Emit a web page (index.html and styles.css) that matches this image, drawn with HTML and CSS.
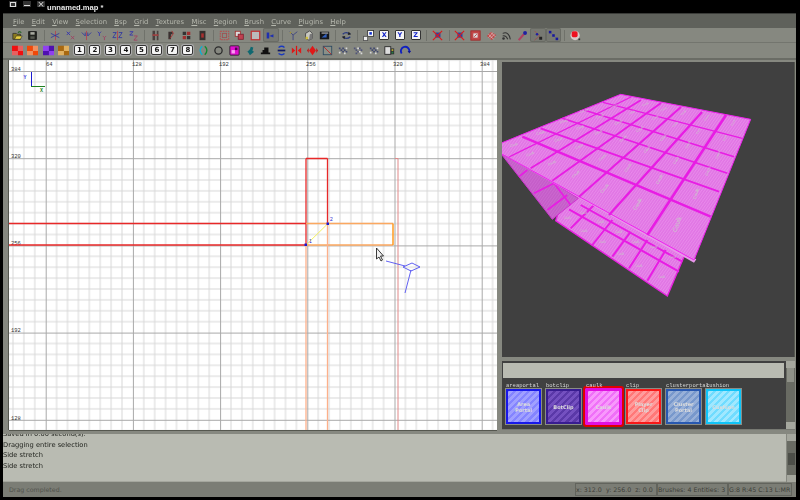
FILE: index.html
```html
<!DOCTYPE html>
<html lang="en">
<head>
<meta charset="utf-8">
<title>unnamed.map *</title>
<link rel="stylesheet" href="styles.css">
</head>
<body>
<svg class="defs" width="0" height="0" aria-hidden="true">
  <defs>
    <symbol id="open" viewBox="0 0 13 13"><path d="M1 4h4l1 1h4v6H1z" fill="#8a7a20" stroke="#222" stroke-width=".8"/><path d="M3 11l2-4h7l-2 4z" fill="#e8d040" stroke="#222" stroke-width=".6"/><path d="M7 3q2-2 4 0" fill="none" stroke="#186018" stroke-width="1.2"/></symbol>
    <symbol id="save" viewBox="0 0 13 13"><rect x="2" y="2" width="9" height="9" fill="#22241f" stroke="#111"/><rect x="4" y="2.5" width="5" height="3" fill="#a8aaa0"/><rect x="4" y="7.5" width="5" height="3" fill="#55574f"/></symbol>
    <symbol id="flipx" viewBox="0 0 13 13"><path d="M6.5 1v11" stroke="#c03040" stroke-width=".8"/><path d="M1 4l10 5M11 4L1 9" stroke="#3038a0" stroke-width="1"/></symbol>
    <symbol id="rotx" viewBox="0 0 13 13"><path d="M2 2l4 4M6 2L2 6" stroke="#3030b0"/><path d="M7 7l4 4M11 7l-4 4" stroke="#a04060"/></symbol>
    <symbol id="flipy" viewBox="0 0 13 13"><path d="M1 3l4 4 0-4M12 3L8 7V3" fill="none" stroke="#3038a0"/><path d="M6.5 1v11" stroke="#c03040" stroke-width=".8"/></symbol>
    <symbol id="roty" viewBox="0 0 13 13"><path d="M2 2l2 2 2-2M4 4v3" stroke="#3030b0" fill="none"/><path d="M8 7l2 2 2-2M10 9v3" stroke="#a04060" fill="none"/></symbol>
    <symbol id="flipz" viewBox="0 0 13 13"><path d="M1 3h4L1 9h4M8 3h4L8 9h4" fill="none" stroke="#3038a0"/><path d="M6.5 1v11" stroke="#c03040" stroke-width=".8"/></symbol>
    <symbol id="rotz" viewBox="0 0 13 13"><path d="M2 2h4L2 6h4" fill="none" stroke="#3030b0"/><path d="M7 7h4l-4 5h4" fill="none" stroke="#a04060"/></symbol>
    <symbol id="csg1" viewBox="0 0 13 13"><path d="M3 1h3v11H3zM8 1h2v11H8z" fill="#4a3f3e"/><path d="M3 6h7" stroke="#a04040" stroke-width="2"/></symbol>
    <symbol id="csg2" viewBox="0 0 13 13"><path d="M4 2h5v3H7v6H4z" fill="#3a3030"/><path d="M8 1l2 3-4 6" stroke="#b03030" fill="none"/></symbol>
    <symbol id="csg3" viewBox="0 0 13 13"><path d="M2 2h4v4H2zM7 7h4v4H7z" fill="#333"/><path d="M7 2h4v4H7zM2 7h4v4H2z" fill="#a03030"/></symbol>
    <symbol id="csg4" viewBox="0 0 13 13"><path d="M3 1h7v11H3z" fill="#35302f"/><path d="M5 4h3v5H5z" fill="#a83030"/></symbol>
    <symbol id="selbox" viewBox="0 0 13 13"><rect x="1.5" y="1.5" width="10" height="10" fill="#888a82" stroke="#c04040" stroke-dasharray="2 1"/><rect x="4" y="4" width="5" height="5" fill="none" stroke="#a05050"/></symbol>
    <symbol id="seltouch" viewBox="0 0 13 13"><rect x="1.5" y="1.5" width="6" height="6" fill="#ddd" stroke="#a03030"/><rect x="5" y="5" width="6" height="6" fill="#c04050" stroke="#802030"/></symbol>
    <symbol id="selinside" viewBox="0 0 13 13"><rect x="1.5" y="1.5" width="10" height="10" fill="#bbb" stroke="#c03030" stroke-width="1.4"/></symbol>
    <symbol id="selact" viewBox="0 0 13 13"><path d="M2 3h3v7H2z" fill="#2030b0"/><path d="M5 7l5-2v4z" fill="#2030b0"/></symbol>
    <symbol id="tree" viewBox="0 0 13 13"><path d="M2 2l4 4 5-4M6 6v6" fill="none" stroke="#3a4080"/><circle cx="3" cy="3" r="1" fill="#a09030"/></symbol>
    <symbol id="cube" viewBox="0 0 13 13"><path d="M3 4l5-3 3 3v6l-4 2-4-2z" fill="#c8c8c0" stroke="#444"/><path d="M8 5l3-1v6l-4 2z" fill="#777"/><rect x="3" y="8" width="3" height="3" fill="#d0c040"/></symbol>
    <symbol id="win" viewBox="0 0 13 13"><rect x="1" y="2" width="11" height="9" fill="#15171a"/><path d="M3 9l6-5v5z" fill="#3060c0"/><rect x="3" y="3" width="8" height="1.2" fill="#ccc"/></symbol>
    <symbol id="cycle" viewBox="0 0 13 13"><path d="M2 5q4-4 9 0M11 8q-4 4-9 0" fill="none" stroke="#2a3a80" stroke-width="1.4"/><path d="M9 2l3 3-4 1zM4 11L1 8l4-1z" fill="#222"/></symbol>
    <symbol id="view2" viewBox="0 0 13 13"><rect x="5.5" y=".5" width="7" height="7" fill="#fff" stroke="#333"/><rect x="7.5" y="2.5" width="3" height="3" fill="#1030d0"/><rect x=".5" y="7.5" width="5" height="5" fill="#eee" stroke="#555"/></symbol>
    <symbol id="csgx" viewBox="0 0 13 13"><path d="M4 3h6v6H4z" fill="#3040a0"/><path d="M1 1l11 11M12 1L1 12" stroke="#e01818" stroke-width="1.3"/></symbol>
    <symbol id="redsq" viewBox="0 0 13 13"><rect x="1" y="1" width="11" height="11" fill="#c04848" stroke="#a02828"/><rect x="4" y="4" width="5" height="5" fill="#ddd"/><path d="M5 8l3-3" stroke="#b03030"/></symbol>
    <symbol id="rdiam" viewBox="0 0 13 13"><path d="M1 7l5-5 6 4-5 6z" fill="#c04848"/><path d="M3 5l6 6M6 3l5 5M8 3L3 9M10 5l-5 5" stroke="#ddd" stroke-width=".7"/></symbol>
    <symbol id="arcs" viewBox="0 0 13 13"><path d="M2 4q7-3 9 7M2 7q4-1 6 4" fill="none" stroke="#333" stroke-width="1.2"/><circle cx="3" cy="10" r="1.5" fill="#333"/></symbol>
    <symbol id="pin" viewBox="0 0 13 13"><path d="M2 12l6-7" stroke="#b04060" stroke-width="2.4"/><circle cx="9.5" cy="3.5" r="2.3" fill="#2020a0"/></symbol>
    <symbol id="vert" viewBox="0 0 13 13"><path d="M3 1l6 6-6 5" fill="none" stroke="#a05050"/><circle cx="6" cy="5" r="1.5" fill="#2020a0"/><rect x="8.5" y="8" width="3.5" height="3.5" fill="#222"/></symbol>
    <symbol id="dots" viewBox="0 0 13 13"><path d="M2 2l9 9" stroke="#667" stroke-width=".6"/><rect x="1" y="1" width="3" height="3" fill="#1818a0"/><rect x="5" y="5" width="3" height="3" fill="#1818a0"/><rect x="9" y="9" width="3" height="3" fill="#1818a0"/></symbol>
    <symbol id="blob" viewBox="0 0 13 13"><circle cx="6" cy="6.500" r="5.500" fill="#d8c8c8"/><rect x="2" y="1.500" width="7" height="7" rx="2" fill="#ee1020"/><rect x="10" y="10" width="2" height="2" fill="#333"/></symbol>
    <symbol id="c-red" viewBox="0 0 13 13"><path d="M0 1h7v6H0zM7 7h6v5H7z" fill="#f01010"/><path d="M7 1h6v6H7zM0 7h7v5H0z" fill="#e86060"/></symbol>
    <symbol id="c-org" viewBox="0 0 13 13"><path d="M0 1h7v6H0zM7 7h6v5H7z" fill="#f04808"/><path d="M7 1h6v6H7zM0 7h7v5H0z" fill="#f09060"/></symbol>
    <symbol id="c-pur" viewBox="0 0 13 13"><path d="M0 1h7v6H0zM7 7h6v5H7z" fill="#9040f0"/><path d="M7 1h6v6H7zM0 7h7v5H0z" fill="#5010b0"/></symbol>
    <symbol id="c-tan" viewBox="0 0 13 13"><path d="M0 1h7v6H0zM7 7h6v5H7z" fill="#a86810"/><path d="M7 1h6v6H7zM0 7h7v5H0z" fill="#e0b060"/></symbol>
    <symbol id="ring" viewBox="0 0 13 13"><path d="M5 1.500Q0 6 5 11.500" fill="none" stroke="#10b0d0" stroke-width="1.6"/><path d="M8 1.500Q13 6 8 11.500" fill="none" stroke="#108830" stroke-width="1.6"/></symbol>
    <symbol id="circ" viewBox="0 0 13 13"><circle cx="6.500" cy="6.500" r="4.300" fill="none" stroke="#2a2a2a" stroke-width="1.500"/></symbol>
    <symbol id="mag" viewBox="0 0 13 13"><rect x="1" y="1" width="11" height="11" rx="1" fill="#e010d0" stroke="#222"/><rect x="3" y="6" width="4" height="4" fill="#f8a0f0"/><rect x="7" y="3" width="3" height="3" fill="#500050"/></symbol>
    <symbol id="teal" viewBox="0 0 13 13"><path d="M1 6l3 2 3-3 1-3 3 1-1 4 2 1-5 4-2-3z" fill="#106870"/></symbol>
    <symbol id="blk" viewBox="0 0 13 13"><path d="M1 9h11v2H1zM3 6h7v3H3zM5 3h5v3H5z" fill="#111"/></symbol>
    <symbol id="blu" viewBox="0 0 13 13"><path d="M3 3q4-3 7 0M3 10q4 3 7 0" fill="none" stroke="#1838c0" stroke-width="1.500"/><rect x="2" y="5.500" width="9" height="2" fill="#101860"/></symbol>
    <symbol id="mirv" viewBox="0 0 13 13"><path d="M6.500 1v11" stroke="#e01010" stroke-width="1.400"/><path d="M5 6.500L1 3v7zM8 6.500L12 3v7z" fill="#e01818"/></symbol>
    <symbol id="mird" viewBox="0 0 13 13"><path d="M6.500 1l4 5.500-4 5.500-4-5.500z" fill="#e01818"/><path d="M2 3.500L0 6.500l2 3zM11 3.500l2 3-2 3z" fill="#c81010"/></symbol>
    <symbol id="dbox" viewBox="0 0 13 13"><rect x="1.500" y="1.500" width="10" height="10" fill="#8a9088" stroke="#2a4860"/><path d="M2 2l9 9" stroke="#c02020"/></symbol>
    <symbol id="pat1" viewBox="0 0 13 13"><path d="M1 3h2v2H1zM5 3h2v2H5zM3 5h2v2H3zM7 5h2v2H7zM5 7h2v2H5zM9 7h2v2H9z" fill="#404870"/><path d="M9 3h2v2H9zM1 8h2v2H1zM7 9h2v2H7z" fill="#d8d8d8"/></symbol>
    <symbol id="pat2" viewBox="0 0 13 13"><path d="M1 3h2v2H1zM7 3h2v2H7zM3 5h2v2H3zM9 5h2v2H9zM5 7h2v2H5zM3 9h2v2H3z" fill="#505478"/><path d="M5 3h2v2H5zM7 7h2v2H7zM9 9h2v2H9z" fill="#dcdcdc"/></symbol>
    <symbol id="photo" viewBox="0 0 13 13"><rect x="1" y="2" width="7" height="9" fill="#ddd" stroke="#222"/><rect x="8" y="4" width="4" height="7" fill="#333"/><rect x="9" y="5" width="2" height="2" fill="#c0b030"/><rect x="9" y="8" width="2" height="2" fill="#208040"/></symbol>
    <symbol id="barc" viewBox="0 0 13 13"><path d="M2 10A5 5 0 1 1 11 8" fill="none" stroke="#1020c0" stroke-width="2.200"/><path d="M9 7l4 0-2 3z" fill="#101890"/></symbol>
    <pattern id="cell" width="87.200" height="87.200" patternUnits="userSpaceOnUse" x="36.700" y="11">
      <path class="minor" d="M10.900 0V87.200M21.800 0V87.200M32.700 0V87.200M43.600 0V87.200M54.500 0V87.200M65.400 0V87.200M76.300 0V87.200M0 10.900H87.200M0 21.800H87.200M0 32.700H87.200M0 43.600H87.200M0 54.500H87.200M0 65.400H87.200M0 76.300H87.200"/>
      <path class="major" d="M.5 0V87.200M0 .5H87.200"/>
    </pattern>
    <pattern id="stripes" width="7" height="7" patternUnits="userSpaceOnUse" patternTransform="rotate(35)">
      <rect width="7" height="7" fill="#e074e4"/>
      <rect width="3" height="7" fill="#e88aea"/>
    </pattern>
    <pattern id="stripes2" width="7" height="7" patternUnits="userSpaceOnUse" patternTransform="rotate(35)">
      <rect width="7" height="7" fill="#c45cc8"/>
      <rect width="3" height="7" fill="#cc68d0"/>
    </pattern>
  </defs>
</svg>

<div class="titlebar">
  <div class="winbtns">
    <span class="winbtn"><span class="g-box"></span></span>
    <span class="winbtn"><span class="g-min"></span></span>
    <span class="winbtn g-close">×</span>
  </div>
  <span class="wintitle">unnamed.map *</span>
</div>

<div class="frame">
  <nav class="menubar">
    <span><u>F</u>ile</span><span><u>E</u>dit</span><span><u>V</u>iew</span><span><u>S</u>election</span><span><u>B</u>sp</span><span><u>G</u>rid</span><span><u>T</u>extures</span><span><u>M</u>isc</span><span><u>R</u>egion</span><span><u>B</u>rush</span><span><u>C</u>urve</span><span><u>P</u>lugins</span><span><u>H</u>elp</span>
  </nav>

  <div class="toolbar tb1">
    <span class="btn"><svg class="ic"><use href="#open"/></svg></span>
    <span class="btn"><svg class="ic"><use href="#save"/></svg></span>
    <i class="sep"></i>
    <span class="btn"><svg class="ic"><use href="#flipx"/></svg></span>
    <span class="btn"><svg class="ic"><use href="#rotx"/></svg></span>
    <span class="btn"><svg class="ic"><use href="#flipy"/></svg></span>
    <span class="btn"><svg class="ic"><use href="#roty"/></svg></span>
    <span class="btn"><svg class="ic"><use href="#flipz"/></svg></span>
    <span class="btn"><svg class="ic"><use href="#rotz"/></svg></span>
    <i class="sep"></i>
    <span class="btn"><svg class="ic"><use href="#csg1"/></svg></span>
    <span class="btn"><svg class="ic"><use href="#csg2"/></svg></span>
    <span class="btn"><svg class="ic"><use href="#csg3"/></svg></span>
    <span class="btn"><svg class="ic"><use href="#csg4"/></svg></span>
    <i class="sep"></i>
    <span class="btn"><svg class="ic"><use href="#selbox"/></svg></span>
    <span class="btn"><svg class="ic"><use href="#seltouch"/></svg></span>
    <span class="btn"><svg class="ic"><use href="#selinside"/></svg></span>
    <span class="btn on"><svg class="ic"><use href="#selact"/></svg></span>
    <i class="sep"></i>
    <span class="btn"><svg class="ic"><use href="#tree"/></svg></span>
    <span class="btn"><svg class="ic"><use href="#cube"/></svg></span>
    <span class="btn"><svg class="ic"><use href="#win"/></svg></span>
    <i class="sep"></i>
    <span class="btn"><svg class="ic"><use href="#cycle"/></svg></span>
    <i class="sep"></i>
    <span class="btn"><svg class="ic"><use href="#view2"/></svg></span>
    <span class="btn"><span class="axis">X</span></span>
    <span class="btn"><span class="axis">Y</span></span>
    <span class="btn"><span class="axis">Z</span></span>
    <i class="sep"></i>
    <span class="btn"><svg class="ic"><use href="#csgx"/></svg></span>
    <i class="sep"></i>
    <span class="btn"><svg class="ic"><use href="#csgx"/></svg></span>
    <span class="btn"><svg class="ic"><use href="#redsq"/></svg></span>
    <span class="btn"><svg class="ic"><use href="#rdiam"/></svg></span>
    <span class="btn"><svg class="ic"><use href="#arcs"/></svg></span>
    <span class="btn"><svg class="ic"><use href="#pin"/></svg></span>
    <span class="btn on"><svg class="ic"><use href="#vert"/></svg></span>
    <span class="btn on"><svg class="ic"><use href="#dots"/></svg></span>
    <i class="sep"></i>
    <span class="btn"><svg class="ic"><use href="#blob"/></svg></span>
  </div>

  <div class="toolbar tb2">
    <span class="btn"><svg class="ic"><use href="#c-red"/></svg></span>
    <span class="btn"><svg class="ic"><use href="#c-org"/></svg></span>
    <span class="btn"><svg class="ic"><use href="#c-pur"/></svg></span>
    <span class="btn"><svg class="ic"><use href="#c-tan"/></svg></span>
    <span class="btn"><span class="num">1</span></span>
    <span class="btn"><span class="num">2</span></span>
    <span class="btn"><span class="num">3</span></span>
    <span class="btn"><span class="num">4</span></span>
    <span class="btn"><span class="num">5</span></span>
    <span class="btn"><span class="num">6</span></span>
    <span class="btn"><span class="num">7</span></span>
    <span class="btn"><span class="num">8</span></span>
    <span class="btn"><svg class="ic"><use href="#ring"/></svg></span>
    <span class="btn"><svg class="ic"><use href="#circ"/></svg></span>
    <span class="btn"><svg class="ic"><use href="#mag"/></svg></span>
    <span class="btn"><svg class="ic"><use href="#teal"/></svg></span>
    <span class="btn"><svg class="ic"><use href="#blk"/></svg></span>
    <span class="btn"><svg class="ic"><use href="#blu"/></svg></span>
    <span class="btn"><svg class="ic"><use href="#mirv"/></svg></span>
    <span class="btn"><svg class="ic"><use href="#mird"/></svg></span>
    <span class="btn"><svg class="ic"><use href="#dbox"/></svg></span>
    <span class="btn"><svg class="ic"><use href="#pat1"/></svg></span>
    <span class="btn"><svg class="ic"><use href="#pat2"/></svg></span>
    <span class="btn"><svg class="ic"><use href="#pat1"/></svg></span>
    <span class="btn"><svg class="ic"><use href="#photo"/></svg></span>
    <span class="btn"><svg class="ic"><use href="#barc"/></svg></span>
  </div>

  <main class="workspace">
    <svg class="view2d" viewBox="0 0 488 370">
      <rect width="488" height="370" fill="#fff"/>
      <rect width="488" height="370" fill="url(#cell)"/>
      <g class="coord">
        <text x="37" y="5.500">64</text><text x="123" y="5.500">128</text><text x="210" y="5.500">192</text><text x="297" y="5.500">256</text><text x="384" y="5.500">320</text><text x="471" y="5.500">384</text>
        <text x="2" y="11">384</text><text x="2" y="98">320</text><text x="2" y="185">256</text><text x="2" y="272">192</text><text x="2" y="359.500">128</text>
      </g>
      <path d="M22.500 12V26" class="ax-v"/>
      <path d="M22 26.500H36" class="ax-h"/>
      <text x="14.500" y="19" class="ax-y">Y</text>
      <text x="31" y="32" class="ax-x">X</text>

      <path d="M0 163.500H297M0 185H297M297 98.500V185M318.500 98.500V163.500M297 98.500H318.500" class="b-red"/>
      <path d="M297 163.500H384M297 185H384" class="b-orange"/>
      <path d="M297 185V370M318.500 163.500V370" class="b-low"/>
      <path d="M384 163.500V185" class="b-end"/>
      <path d="M386 98.500H389V370" class="b-pink"/>
      <path d="M297 185L319 163.500" class="b-yellow"/>
      <rect x="295.500" y="183.500" width="2.500" height="2.500" class="b-dot"/>
      <rect x="317.500" y="162.500" width="2.500" height="2.500" class="b-dot"/>
      <text x="300" y="183" class="b-num">1</text>
      <text x="321" y="161" class="b-num">2</text>
      <path d="M377 201L396 206M394 207L403 203L411 207L402 211ZM402 210L396 233" class="cam"/>
      <path d="M367.500 188V199L370 197L372 201L373.500 200L371.500 196L374.500 196Z" class="cursor"/>
    </svg>

    <div class="rightcol">
      <svg class="view3d" viewBox="9 6 876 885">
        <rect x="9" y="6" width="876" height="885" fill="#404040"/>
        <path d="M170 482L505 708L555 590L590 590L205 380Z" fill="url(#stripes)" stroke="#e820e0" stroke-width="4"/>
        <path class="line3" stroke-width="6" d="M210 448L540 635M245 435L550 605M215 505L285 435M280 555L340 480M340 590L395 515M390 625L445 540M445 662L500 570"/>
        <g class="lbl3 small">
          <text x="205" y="478">Caulk</text><text x="255" y="515">Caulk</text><text x="310" y="550">Caulk</text><text x="365" y="585">Caulk</text><text x="420" y="620">Caulk</text><text x="488" y="655">Caulk</text>
          <text x="255" y="462">Caulk</text><text x="305" y="490">Caulk</text><text x="360" y="520">Caulk</text><text x="410" y="550">Caulk</text><text x="465" y="565">Caulk</text><text x="522" y="595">Caulk</text>
        </g>
        <path d="M5 280L160 478L238 415L160 366L5 275Z" fill="url(#stripes2)" stroke="#d030d0" stroke-width="3"/>
        <path d="M60 350L85 330M105 400L165 370M145 450L205 405M165 370L215 435" class="line3" stroke-width="5"/>
        <path d="M5 280L585 608L592 598L5 272Z" fill="#e898ea"/>
        <path d="M365 103L755 178L585 600L5 280V250Z" fill="url(#stripes)" stroke="#f020f0" stroke-width="3"/>
        <g class="line3">
          <path stroke-width="4" d="M30 291L396 111"/>
          <path stroke-width="5" d="M95 325L426 120"/>
          <path stroke-width="5.500" d="M160 362L486 129"/>
          <path stroke-width="6" d="M240 410L546 141"/>
          <path stroke-width="7" d="M330 465L609 156"/>
          <path stroke-width="8" d="M445 525L681 165"/>
          <path stroke-width="4" d="M312 127L730 235"/>
          <path stroke-width="4.500" d="M255 150L705 290"/>
          <path stroke-width="5" d="M190 175L685 340"/>
          <path stroke-width="6" d="M125 205L660 395"/>
          <path stroke-width="7" d="M70 230L635 470"/>
        </g>
        <g class="lbl3">
          <text transform="translate(540 495) rotate(-70) scale(1.900)">Caulk</text>
          <text transform="translate(420 435) rotate(-60) scale(1.500)">Caulk</text>
          <text transform="translate(320 388) rotate(-50) scale(1.300)">Caulk</text>
          <text transform="translate(233 345) rotate(-40) scale(1.100)">Caulk</text>
          <text transform="translate(160 312) rotate(-25)">Caulk</text>
          <text transform="translate(95 285) rotate(-20)">Caulk</text>
          <text transform="translate(45 258) rotate(-15)">Caulk</text>
          <text transform="translate(595 403) rotate(-70) scale(1.300)">Caulk</text>
          <text transform="translate(485 360) rotate(-62) scale(1.200)">Caulk</text>
          <text transform="translate(390 325) rotate(-55) scale(1.100)">Caulk</text>
          <text transform="translate(313 295) rotate(-40)">Caulk</text>
          <text transform="translate(243 262) rotate(-30)">Caulk</text>
          <text transform="translate(180 242) rotate(-20)">Caulk</text>
          <text transform="translate(125 222) rotate(-15)">Caulk</text>
          <text transform="translate(630 335) rotate(-70) scale(1.100)">Caulk</text>
          <text transform="translate(535 302) rotate(-62)">Caulk</text>
          <text transform="translate(447 270) rotate(-50)">Caulk</text>
          <text transform="translate(375 238) rotate(-40)">Caulk</text>
          <text transform="translate(300 220) rotate(-25)">Caulk</text>
          <text transform="translate(245 205) rotate(-20)">Caulk</text>
          <text transform="translate(195 187) rotate(-15)">Caulk</text>
          <text transform="translate(660 285) rotate(-70)">Caulk</text>
          <text transform="translate(570 255) rotate(-60)">Caulk</text>
          <text transform="translate(495 235) rotate(-50)">Caulk</text>
          <text transform="translate(425 210) rotate(-35)">Caulk</text>
          <text transform="translate(360 190) rotate(-25)">Caulk</text>
          <text transform="translate(305 172) rotate(-20)">Caulk</text>
          <text transform="translate(255 155) rotate(-15)">Caulk</text>
          <text transform="translate(680 235) rotate(-65) scale(.8)">Caulk</text>
          <text transform="translate(600 215) rotate(-55) scale(.8)">Caulk</text>
          <text transform="translate(530 195) rotate(-45) scale(.8)">Caulk</text>
          <text transform="translate(470 175) rotate(-30) scale(.8)">Caulk</text>
          <text transform="translate(400 160) rotate(-25) scale(.8)">Caulk</text>
          <text transform="translate(345 140) rotate(-15) scale(.8)">Caulk</text>
          <text transform="translate(705 190) rotate(-60) scale(.8)">Caulk</text>
          <text transform="translate(625 175) rotate(-50) scale(.8)">Caulk</text>
          <text transform="translate(555 160) rotate(-40) scale(.8)">Caulk</text>
          <text transform="translate(495 150) rotate(-25) scale(.8)">Caulk</text>
          <text transform="translate(440 135) rotate(-20) scale(.8)">Caulk</text>
        </g>
      </svg>

      <div class="splitter"></div>

      <section class="texpanel">
        <div class="texmain">
          <div class="filter"></div>
          <div class="tiles">
            <figure class="tile t-area"><figcaption>areaportal</figcaption><div class="swatch"><span>Area<br>Portal</span></div></figure>
            <figure class="tile t-bot"><figcaption>botclip</figcaption><div class="swatch"><span>BotClip</span></div></figure>
            <figure class="tile t-caulk sel"><figcaption>caulk</figcaption><div class="swatch"><span>Caulk</span></div></figure>
            <figure class="tile t-clip"><figcaption>clip</figcaption><div class="swatch"><span>Player<br>Clip</span></div></figure>
            <figure class="tile t-cluster"><figcaption>clusterportal</figcaption><div class="swatch"><span>Cluster<br>Portal</span></div></figure>
            <figure class="tile t-cushion"><figcaption>cushion</figcaption><div class="swatch"><span>Cushion</span></div></figure>
          </div>
        </div>
        <div class="scroll"><b class="up"></b><b class="track"><i class="thumb t1"></i></b><b class="down"></b></div>
      </section>
    </div>
  </main>

  <section class="consolewrap">
    <div class="console">
      <p>Saved in 0.00 second(s).</p>
      <p>Dragging entire selection</p>
      <p>Side stretch</p>
      <p>Side stretch</p>
    </div>
    <div class="scroll"><b class="up"></b><b class="track"><i class="thumb t2"></i></b><b class="down"></b></div>
  </section>

  <footer class="status">
    <span class="smain">Drag completed.</span>
    <span class="scell s1">x: 312.0  y: 256.0  z: 0.0</span>
    <span class="scell s2">Brushes: 4 Entities: 3</span>
    <span class="scell s3">G:8 R:45 C:13 L:MR</span>
  </footer>
</div>
</body>
</html>
```
FILE: styles.css
```css
html, body { margin: 0; padding: 0; }
body {
  width: 800px;
  height: 500px;
  overflow: hidden;
  background: #000;
  font-family: "DejaVu Sans", sans-serif;
  filter: blur(.35px);
}
.defs { position: absolute; }
.titlebar { height: 13px; display: flex; align-items: center; background: #000; }
.winbtns { display: flex; gap: 6px; margin-left: 9px; width: 38px; align-self: flex-start; padding-top: 1px; }
.winbtn { width: 8px; height: 6px; display: flex; align-items: center; justify-content: center; color: #ddd; font-size: 9px; line-height: 6px; background: #333; }
.g-box { width: 4px; height: 3px; border: 1px solid #ddd; }
.g-min { width: 6px; height: 1px; background: #ddd; margin-top: 3px; }
.wintitle { color: #e8e8e8; font: bold 7.600px "Liberation Sans", sans-serif; margin-top: 1px; }

.frame { margin-left: 3px; width: 793px; height: 484px; display: flex; flex-direction: column; background: #868880; }
.menubar { height: 15px; flex: none; display: flex; align-items: center; gap: 7.300px; padding: 1px 0 0 10px; background: #5f615b; color: #b6b8ae; font-size: 6.800px; border-top: 1px solid #3a3b38; box-sizing: border-box; }
.toolbar { flex: none; display: flex; align-items: center; padding-left: 6.500px; box-sizing: border-box; }
.tb1 { height: 15px; background: #868880; border-bottom: 1px solid #73756e; }
.tb2 { height: 17px; background: #868880; border-bottom: 2px solid #6a6c65; padding-bottom: 1px; }
.btn { flex: none; width: 15.600px; height: 14px; display: flex; align-items: center; justify-content: center; box-sizing: border-box; }
.tb2 .btn { width: 15.520px; }
.btn.on { background: #777972; border-radius: 2px; box-shadow: inset 0 0 0 1px #696b64; }
.ic { width: 11px; height: 11px; display: block; }
.sep { flex: none; width: 6.600px; height: 11px; position: relative; background: linear-gradient(90deg, transparent 3px, #70726b 3px, #70726b 4px, transparent 4px); }
.axis { width: 10px; height: 10px; border: 1px solid #333; border-radius: 1px; background: #f4f4f4; color: #1020c8; font-size: 6.500px; font-weight: bold; display: flex; align-items: center; justify-content: center; box-sizing: border-box; }
.num { width: 11px; height: 10px; border: 1px solid #333; border-radius: 2px; background: #f4f4f4; color: #111; font-size: 7px; font-weight: bold; display: flex; align-items: center; justify-content: center; box-sizing: border-box; box-shadow: 0 0 0 1px #aaa; }

.workspace { height: 371px; flex: none; display: flex; padding-left: 6px; box-sizing: border-box; }
.view2d { width: 488px; height: 370px; flex: none; display: block; box-shadow: -1px 0 0 #55574f, 0 1px 0 #55574f; }
.minor { stroke: #d8d8d8; stroke-width: 1; fill: none; }
.major { stroke: #a8a8a8; stroke-width: 1; fill: none; }
.coord { font: 5.500px "Liberation Mono", monospace; fill: #333; }
.ax-v { stroke: #1a1ad0; stroke-width: 1; fill: none; }
.ax-h { stroke: #208020; stroke-width: 1; fill: none; }
.ax-y { font: bold 5px "Liberation Mono", monospace; fill: #4040e0; }
.ax-x { font: bold 5px "Liberation Mono", monospace; fill: #208020; }
.b-red { stroke: #e82828; stroke-width: 1.300; fill: none; }
.b-orange { stroke: #fca860; stroke-width: 1.300; fill: none; }
.b-low { stroke: #fdb08a; stroke-width: 1.300; fill: none; }
.b-end { stroke: #ff9a20; stroke-width: 1.500; fill: none; }
.b-pink { stroke: #e08888; stroke-width: 1; fill: none; }
.b-yellow { stroke: #f4f060; stroke-width: 1; fill: none; }
.b-dot { fill: #1a1ad0; }
.b-num { font: 5px "Liberation Sans", sans-serif; fill: #1a1ad0; }
.cam { stroke: #5050f0; stroke-width: .9; fill: none; }
.cursor { fill: #f0f0f0; stroke: #222; stroke-width: .9; }

.rightcol { width: 294px; flex: none; margin-left: 5px; padding-top: 2px; box-sizing: border-box; display: flex; flex-direction: column; }
.view3d { width: 292px; height: 295px; flex: none; display: block; border-right: 1px solid #55574f; }
.line3 { stroke: #e81ce4; fill: none; }
.line3 path { stroke: #e81ce4; fill: none; }
.lbl3 { font: 10px "Liberation Sans", sans-serif; fill: #c8c8c8; text-anchor: middle; }
.lbl3.small { font-size: 8px; }
.splitter { height: 4px; flex: none; }
.texpanel { height: 69px; flex: none; display: flex; background: #404040; border: 1px solid #777972; border-width: 0 0 1px; width: 293px; box-sizing: border-box; }
.texmain { flex: 1; min-width: 0; display: flex; flex-direction: column; }
.filter { height: 15px; flex: none; margin: 2px 1px 1px 1px; background: #b9bbb2; }
.tiles { display: flex; gap: 3px; padding-left: 3px; }
.tile { margin: 0; width: 37px; flex: none; position: relative; padding-top: 9px; }
.tile figcaption { position: absolute; left: 1px; top: 3.500px; font: 5.500px "Liberation Mono", monospace; color: #d8d8d8; white-space: nowrap; line-height: 6px; }
.swatch { width: 37px; height: 37px; box-sizing: border-box; border: 2px solid var(--edge); outline: 1px solid #8a8c86; outline-offset: -1px; display: flex; align-items: center; justify-content: center; text-align: center; background: repeating-linear-gradient(135deg, var(--a) 0 2.500px, var(--b) 2.500px 5px); color: #dcdcdc; font: bold 5px/6px "DejaVu Sans", sans-serif; }
.swatch { box-shadow: inset 0 0 0 1px var(--edge); }
.t-area { --a: #8484ff; --b: #a0a0ff; --edge: #1818e8; }
.t-bot { --a: #5a38a8; --b: #7450c0; --edge: #381c90; }
.t-caulk { --a: #f070f8; --b: #f898fc; --edge: #e010e0; }
.t-clip { --a: #ff7878; --b: #ff9c9c; --edge: #f81818; }
.t-cluster { --a: #7898cc; --b: #98b0d8; --edge: #2858b0; }
.t-cushion { --a: #70dcff; --b: #a0e8ff; --edge: #10c4f8; }
.tile.sel .swatch { outline: 2px solid #e00000; outline-offset: 0; border-radius: 1px; }

.scroll { width: 9px; flex: none; margin-left: 1px; display: flex; flex-direction: column; background: #77796f; }
.scroll b { display: block; }
.scroll .up, .scroll .down { height: 7px; flex: none; background: #a5a79e; }
.scroll .track { flex: 1; background: #696b63; position: relative; }
.thumb { display: block; margin: 0 1px; background: #8f9188; }
.thumb.t1 { height: 14px; }
.thumb.t2 { height: 12px; background: #4c4e48; margin-top: 12px; }

.consolewrap { height: 51px; flex: none; display: flex; padding-top: 3px; box-sizing: border-box; }
.console { flex: none; width: 783px; box-sizing: border-box; background: #b9bbb2; color: #22241f; font-size: 6.700px; line-height: 10.500px; overflow: hidden; display: flex; flex-direction: column; justify-content: flex-end; padding: 0 0 10px 0; border-bottom: 1px solid #a5a79e; }
.console p { margin: 0; flex: none; }
.status { height: 15px; flex: none; display: flex; align-items: stretch; background: #7b7d75; font-size: 6.300px; padding: 1px 3px 1px 3px; box-sizing: border-box; color: #3e4039; }
.smain { flex: none; width: 569px; color: #50524b; display: flex; align-items: center; padding-left: 3px; box-sizing: border-box; }
.scell { flex: none; display: flex; align-items: center; white-space: pre; box-shadow: inset 0 0 0 1px #62645d; padding-left: 1px; box-sizing: border-box; overflow: hidden; }
.s1 { width: 82px; }
.s2 { width: 71px; }
.s3 { width: 64px; }
```
